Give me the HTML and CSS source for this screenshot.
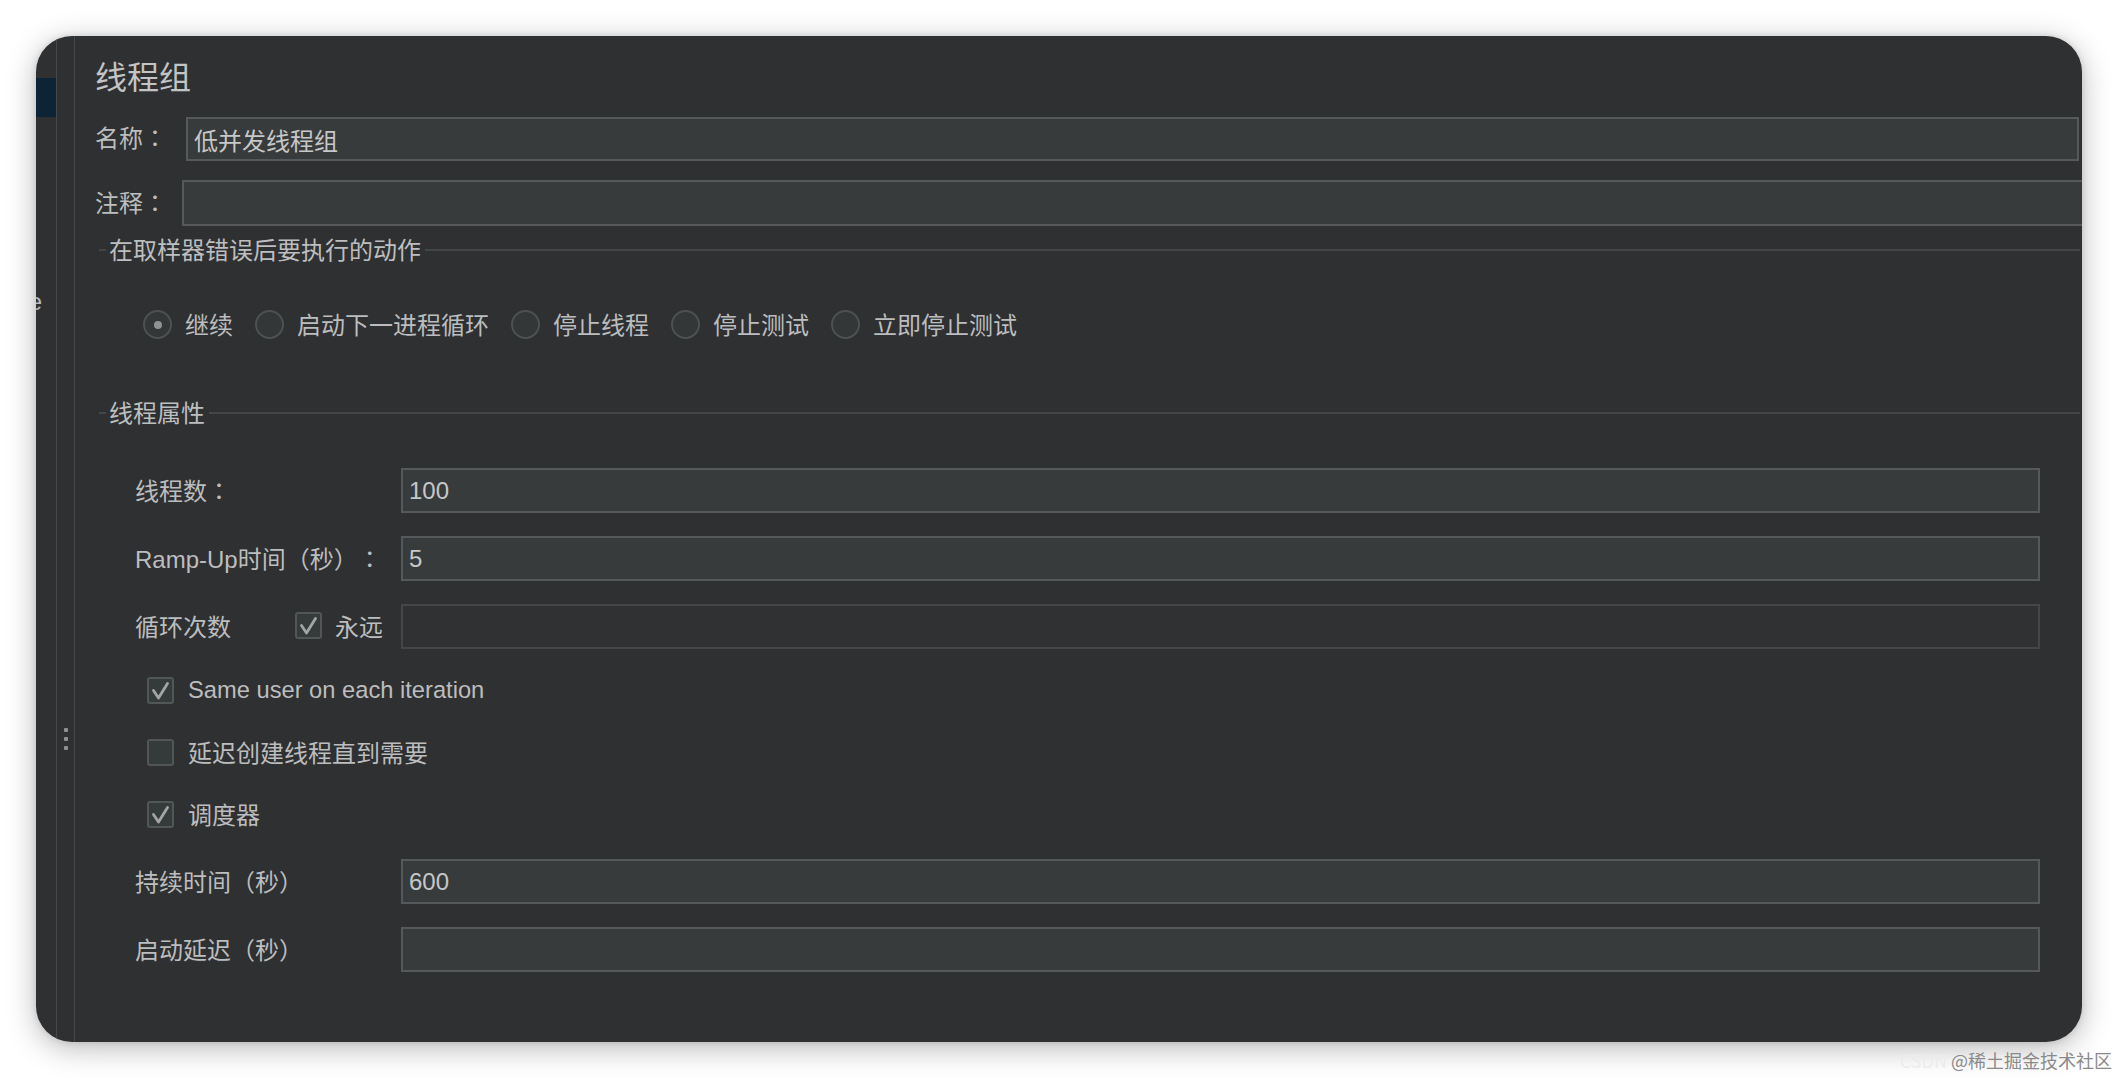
FILE: index.html
```html
<!DOCTYPE html>
<html lang="zh-CN">
<head>
<meta charset="utf-8">
<title>线程组</title>
<link rel="stylesheet" href="styles.css">
</head>
<body>
<div class="window">
  <aside class="tree">
    <div class="tree-row tree-row--selected"></div>
    <div class="tree-row tree-row--clipped">Response</div>
  </aside>
  <div class="splitter">
    <span class="grip"></span>
    <span class="grip"></span>
    <span class="grip"></span>
  </div>
  <main class="editor">
    <h1 class="editor-title">线程组</h1>

    <div class="field-row field-row--name">
      <label class="field-label field-label--name">名称<span class="colon" lang="zh-Hant">：</span></label>
      <input class="text-input text-input--name" type="text" value="低并发线程组">
    </div>
    <div class="field-row field-row--comment">
      <label class="field-label field-label--comment">注释<span class="colon" lang="zh-Hant">：</span></label>
      <input class="text-input text-input--comment" type="text" value="">
    </div>

    <section class="group">
      <div class="group-title"><span class="group-legend">在取样器错误后要执行的动作</span></div>
      <div class="radio-row">
        <label class="radio-item"><span class="radio radio--on"></span><span class="item-text">继续</span></label>
        <label class="radio-item"><span class="radio"></span><span class="item-text">启动下一进程循环</span></label>
        <label class="radio-item"><span class="radio"></span><span class="item-text">停止线程</span></label>
        <label class="radio-item"><span class="radio"></span><span class="item-text">停止测试</span></label>
        <label class="radio-item"><span class="radio"></span><span class="item-text">立即停止测试</span></label>
      </div>
    </section>

    <section class="group group--props">
      <div class="group-title"><span class="group-legend">线程属性</span></div>

      <div class="prop-row prop-row--first">
        <span class="prop-label">线程数<span class="colon" lang="zh-Hant">：</span></span>
        <input class="text-input" type="text" value="100">
      </div>
      <div class="prop-row">
        <span class="prop-label">Ramp-Up时间（秒）<span class="colon" lang="zh-Hant">：</span></span>
        <input class="text-input" type="text" value="5">
      </div>
      <div class="prop-row">
        <span class="prop-label prop-label--loop">
          <span>循环次数</span>
          <span class="check-item">
            <span class="checkbox"><svg viewBox="0 0 27 27"><path d="M6.5 13.5 L11.5 21 L20.5 6.5"/></svg></span>
            <span>永远</span>
          </span>
        </span>
        <input class="text-input text-input--disabled" type="text" value="" disabled>
      </div>

      <div class="check-row check-row--first">
        <span class="checkbox"><svg viewBox="0 0 27 27"><path d="M6.5 13.5 L11.5 21 L20.5 6.5"/></svg></span>
        <span class="latin">Same user on each iteration</span>
      </div>
      <div class="check-row">
        <span class="checkbox"></span>
        <span class="check-text">延迟创建线程直到需要</span>
      </div>
      <div class="check-row">
        <span class="checkbox"><svg viewBox="0 0 27 27"><path d="M6.5 13.5 L11.5 21 L20.5 6.5"/></svg></span>
        <span class="check-text">调度器</span>
      </div>

      <div class="prop-row prop-row--after-checks">
        <span class="prop-label">持续时间（秒）</span>
        <input class="text-input" type="text" value="600">
      </div>
      <div class="prop-row">
        <span class="prop-label">启动延迟（秒）</span>
        <input class="text-input" type="text" value="">
      </div>
    </section>
  </main>
</div>

<div class="watermark"><span class="watermark-faint">CSDN</span><span class="watermark-main">@稀土掘金技术社区</span></div>
</body>
</html>
```

FILE: styles.css
```css
html, body {
  margin: 0;
  background: #ffffff;
}

body {
  position: relative;
  height: 1078px;
  overflow: hidden;
  font-family: "Liberation Sans", "Noto Sans CJK SC", sans-serif;
  font-size: 24px;
  color: #bcbdbe;
  text-spacing-trim: space-all;
}

/* centred full-width colon */
.colon {
  font-family: "Noto Sans CJK TC", sans-serif;
}

.latin {
  font-size: 23.7px;
}

/* CJK ink sits a little low in its line box; lift it to the control centre */
.item-text {
  padding-bottom: 3px;
}

.check-text {
  padding-bottom: 1px;
}

/* Application window */
.window {
  margin: 36px 0 0 36px;
  width: 2046px;
  height: 1006px;
  border-radius: 36px;
  background: #2f3032;
  display: flex;
  overflow: hidden;
  box-shadow: 0 6px 30px rgba(0, 0, 0, 0.28), 0 0 6px rgba(0, 0, 0, 0.12);
}

/* Tree pane, mostly collapsed */
.tree {
  width: 20px;
  flex: none;
  border-right: 1px solid #45484a;
  display: flex;
  flex-direction: column;
}

.tree-row {
  height: 39px;
  flex: none;
}

.tree-row--selected {
  margin-top: 42px;
  background: #0d2437;
}

.tree-row--clipped {
  margin-top: 165px;
  display: flex;
  justify-content: flex-end;
  align-items: center;
  padding-right: 14px;
  overflow: hidden;
  white-space: nowrap;
  color: #b9babb;
}

/* Split pane divider */
.splitter {
  width: 18px;
  flex: none;
  border-right: 1px solid #45484a;
  display: flex;
  flex-direction: column;
  align-items: center;
  padding-top: 692px;
  gap: 5px;
  box-sizing: border-box;
}

.grip {
  width: 4px;
  height: 4px;
  background: #8e9091;
  border-radius: 1px;
}

/* Editor panel */
.editor {
  flex: 1;
  min-width: 0;
  padding-left: 20px;
  overflow: hidden;
  display: flex;
  flex-direction: column;
}

.editor-title {
  margin: 22px 0 0;
  height: 40px;
  font-size: 32px;
  font-weight: normal;
  line-height: 40px;
  color: #c3c4c5;
}

.field-row {
  display: flex;
  align-items: center;
  flex: none;
}

.field-row--name {
  margin-top: 19px;
  height: 44px;
}

.field-row--comment {
  margin-top: 19px;
  height: 46px;
}

.field-label {
  flex: none;
  white-space: nowrap;
  padding-bottom: 4px;
}

.field-label--name { width: 91px; padding-bottom: 5px; }
.field-label--comment { width: 87px; }

.text-input {
  box-sizing: border-box;
  flex: 1;
  min-width: 0;
  height: 100%;
  margin: 0;
  padding: 0 6px;
  border: 2px solid #56595b;
  border-radius: 0;
  background: #383b3c;
  font: inherit;
  color: #c6c7c8;
  outline: none;
}

.text-input--name { margin-right: 3px; }
.text-input--comment { margin-right: -30px; }

.text-input--disabled {
  background: #2f3133;
  border-color: #444749;
}

/* Titled groups */
.group {
  margin: 0 2px 0 4px;
  flex: none;
  display: flex;
  flex-direction: column;
}

.group-title {
  margin-top: 8px;
  height: 32px;
  display: flex;
  align-items: center;
}

.group-title::before {
  content: "";
  width: 7px;
  height: 2px;
  background: #434648;
}

.group-title::after {
  content: "";
  flex: 1;
  height: 2px;
  background: #434648;
}

.group-legend {
  padding: 1px 4px 0 3px;
  line-height: 32px;
  white-space: nowrap;
  color: #bdbebf;
}

.group--props .group-title {
  margin-top: 58px;
}

/* Radio buttons */
.radio-row {
  margin-top: 44px;
  padding-left: 44px;
  height: 29px;
  display: flex;
  align-items: center;
  gap: 22px;
}

.radio-item {
  display: flex;
  align-items: center;
  gap: 13px;
  white-space: nowrap;
}

.radio {
  box-sizing: border-box;
  width: 29px;
  height: 29px;
  border-radius: 50%;
  border: 2px solid #4c5152;
  background: #333738;
  display: flex;
  align-items: center;
  justify-content: center;
}

.radio--on::after {
  content: "";
  width: 8px;
  height: 8px;
  border-radius: 50%;
  background: #8f9293;
}

/* Property rows */
.prop-row {
  display: flex;
  align-items: center;
  height: 45px;
  margin-top: 23px;
  padding: 0 40px 0 36px;
}

.prop-row--first { margin-top: 39px; }
.prop-row--after-checks { margin-top: 25px; }

.prop-label {
  flex: none;
  width: 266px;
  white-space: nowrap;
  padding-bottom: 3px;
}

.prop-label--loop {
  box-sizing: border-box;
  display: flex;
  align-items: center;
  justify-content: space-between;
  padding-right: 18px;
}

.check-item {
  display: flex;
  align-items: center;
  gap: 13px;
}

/* Checkboxes */
.check-row {
  display: flex;
  align-items: center;
  gap: 14px;
  height: 40px;
  margin-top: 22px;
  padding-left: 48px;
  white-space: nowrap;
}

.check-row--first { margin-top: 21px; }

.checkbox {
  box-sizing: border-box;
  flex: none;
  width: 27px;
  height: 27px;
  border: 2px solid #515657;
  border-radius: 3px;
  background: #353a3b;
  display: flex;
}

.checkbox svg {
  flex: none;
  margin: -2px;
  width: 27px;
  height: 27px;
}

.checkbox path {
  fill: none;
  stroke: #a2a4a5;
  stroke-width: 2.8;
  stroke-linecap: round;
  stroke-linejoin: round;
}

/* Image host watermark */
.watermark {
  position: absolute;
  right: 6px;
  top: 1047px;
  font-family: "Noto Sans CJK SC", sans-serif;
  font-size: 18px;
  line-height: 26px;
  white-space: nowrap;
}

.watermark-faint {
  color: #ececec;
  margin-right: 4px;
}

.watermark-main {
  color: #8a8a8a;
}
```
